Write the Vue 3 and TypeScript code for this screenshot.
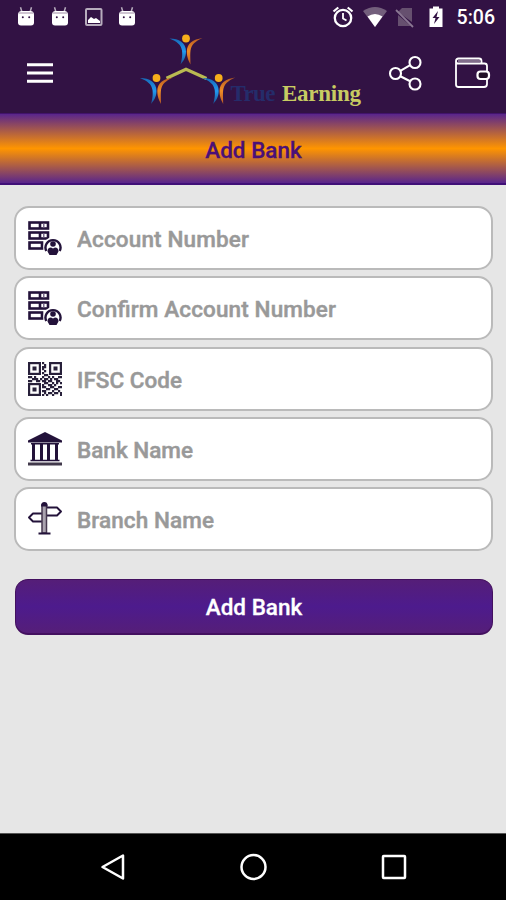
<script setup lang="ts">
type IconName = 'account' | 'qr' | 'bank' | 'sign'

interface Field {
  label: string
  icon: IconName
  width: number
}

const fields: Field[] = [
  { label: 'Account Number', icon: 'account', width: 172 },
  { label: 'Confirm Account Number', icon: 'account', width: 259 },
  { label: 'IFSC Code', icon: 'qr', width: 105 },
  { label: 'Bank Name', icon: 'bank', width: 116 },
  { label: 'Branch Name', icon: 'sign', width: 137 },
]

const people = [
  { x: 46, y: 8.5 },
  { x: 16.5, y: 48 },
  { x: 78.7, y: 48 },
]

const finders = [
  { x: 0, y: 0 },
  { x: 21, y: 0 },
  { x: 0, y: 21 },
]

// Modules between the finder squares, each two units wide.
const qrRows: string[] = [
  '00000001000000000',
  '00000000100000000',
  '00000001100000000',
  '00000001000000000',
  '00000000100000000',
  '00000001000000000',
  '00000000110000000',
  '11010001001010011',
  '00111010110101100',
  '11001101101100110',
  '00000000110010101',
  '00000001001101000',
  '00000001100110011',
  '00000000011001100',
  '00000001100010010',
  '00000000101101101',
  '00000001010010001',
]
const qrPath = qrRows
  .map((row, y) => [...row].map((c, x) => (c === '1' ? `M${x * 2} ${y * 2}h2.2v2.2h-2.2z` : '')).join(''))
  .join('')
</script>

<template>
  <div class="screen">
    <div class="status">
      <div class="notices">
        <template v-for="n in 4" :key="n">
          <svg v-if="n === 3" width="20" height="20" viewBox="0 0 20 20">
            <rect x="2" y="2" width="15.500" height="16" rx="1" fill="none" stroke="#b7acbd" stroke-width="2" />
            <path d="M4 16v-3l3-3 3 2 2-1 4 3v2z" fill="#fff" />
          </svg>
          <svg v-else width="20" height="20" viewBox="0 0 20 20">
            <path d="M4.500 .3l1.500 5M15.500 .3l-1.500 5" stroke="#b7acbd" stroke-width="1.500" />
            <path d="M2 8Q2 4 5.500 4h9q3.500 0 3.500 4v7.500q0 3-3 3H5q-3 0-3-3z" fill="#fff" />
            <path d="M3 6h14" stroke="#cfc5d2" stroke-width="2" />
            <circle cx="6.800" cy="10.300" r="1" fill="#321244" />
            <circle cx="13.200" cy="10.300" r="1" fill="#321244" />
          </svg>
        </template>
      </div>
      <div class="system">
        <svg width="24" height="24" viewBox="0 0 24 24" fill="none" stroke="#fff">
          <circle cx="12" cy="13" r="8.200" stroke-width="2.300" />
          <path d="M12 8v5.500l3.500 2" stroke-width="1.800" />
          <path d="M2.500 6.500l4.800-4M21.500 6.500l-4.800-4" stroke-width="2.200" />
        </svg>
        <svg class="wifi" width="24" height="22" viewBox="0 0 24 22">
          <path d="M0 5Q12-3 24 5L12 21z" fill="#735f7c" />
          <path d="M4.500 10.500Q12 5.500 19.500 10.500L12 21z" fill="#fff" />
        </svg>
        <svg class="sim" width="20" height="22" viewBox="0 0 20 22">
          <path d="M7 2h10v14L3 6zM3 9v11h13z" fill="#66506f" />
          <path d="M1 4l17 17" stroke="#8b7893" stroke-width="1.800" />
        </svg>
        <svg class="battery" width="16" height="22" viewBox="0 0 16 22">
          <path d="M5 .5h6v2h3.500v18.500h-13V2.500H5z" fill="#fff" />
          <path d="M10 5l-5.500 7h3L6 18l5.500-7h-3z" fill="#321244" />
        </svg>
        <span class="clock">5:06</span>
      </div>
    </div>

    <header class="header">
      <svg class="menu" width="28" height="22" viewBox="0 0 28 22">
        <path d="M1 2.700h26M1 11h26M1 19.300h26" stroke="#fff" stroke-width="3" />
      </svg>
      <svg class="logo" width="224" height="80" viewBox="0 0 224 80">
        <defs>
          <linearGradient id="limb" x1="0" y1="0" x2="0" y2="1">
            <stop offset="0" stop-color="#1769b8" />
            <stop offset=".5" stop-color="#219af0" />
            <stop offset="1" stop-color="#1b4f91" />
          </linearGradient>
          <linearGradient id="flame" x1="0" y1="0" x2="0" y2="1">
            <stop offset="0" stop-color="#b85b22" />
            <stop offset=".5" stop-color="#f08c26" />
            <stop offset="1" stop-color="#b75826" />
          </linearGradient>
        </defs>
        <path d="M26.500 48.300L46 39.300l20.500 9.200" fill="none" stroke="#b9ba52" stroke-width="3.200" />
        <g v-for="(p, i) in people" :key="i" :transform="`translate(${p.x} ${p.y})`">
          <path d="M-16.500 0C-7 0 0 4 0 13C0 19-3 23-5.500 26C-4 20-3.500 17-4 12C-5 6-9 3-16.500 0z" fill="url(#limb)" />
          <path d="M16.500-.5C7 1 .8 5 .8 13C.8 19 3 23 4.500 26C4.500 20 4 17 4.500 12C5.500 6 9 3 16.500-.5z" fill="url(#flame)" />
          <circle cx="0" cy="0" r="3.900" fill="#f7ae1b" />
        </g>
        <text x="90.500" y="71" textLength="45" class="word true">True</text>
        <text x="142" y="71" textLength="79" class="word earning">Earning</text>
      </svg>
      <svg class="share" width="36" height="38" viewBox="0 0 36 38" fill="none" stroke="#fff" stroke-width="2.100">
        <circle cx="7.500" cy="19.500" r="5.500" />
        <circle cx="27" cy="8.500" r="5.500" />
        <circle cx="27" cy="30" r="5.500" />
        <path d="M12.300 16.800l9.900-5.600M12.300 22.200l9.900 5.100" />
      </svg>
      <svg class="wallet" width="38" height="34" viewBox="0 0 38 34" fill="none" stroke="#fff" stroke-width="1.800">
        <path d="M2 4v23.500q0 2.500 2.500 2.500H30q3 0 3-3v-5M33 15v-6q0-2.500-2.500-2.500H4Q2 6.500 2 4t2.500-2.500H25q2.500 0 2.500 2.500v2" />
        <path d="M4 4h22" stroke="#b7acbd" stroke-width="1.200" />
        <rect x="23.500" y="14.500" width="11.500" height="7.500" rx="3" fill="#211127" stroke-width="2.200" />
      </svg>
    </header>

    <div class="banner"><h1 class="action-text">Add Bank</h1></div>

    <main class="content">
      <div class="fields">
        <div v-for="f in fields" :key="f.label" class="field">
          <svg v-if="f.icon === 'account'" class="icon" viewBox="0 0 34 34">
            <g fill="#fff" stroke="#23123a" stroke-width="2.600">
              <rect x="1.500" y="1.500" width="18.500" height="6" />
              <rect x="1.500" y="11.500" width="18.500" height="6" />
              <rect x="1.500" y="21.500" width="12.500" height="6" />
            </g>
            <path d="M12 1v7M12 11v7" stroke="#23123a" stroke-width="2.600" />
            <path d="M15.800 2v5M15.800 12v5" stroke="#66557a" stroke-width="1.300" />
            <circle cx="25" cy="25.500" r="9.500" fill="#fff" />
            <path d="M18.300 30a7.500 7.500 0 1 1 13.400 0" fill="none" stroke="#23123a" stroke-width="2.400" />
            <circle cx="25" cy="23" r="2.800" fill="#23123a" />
            <path d="M19.500 30.500q0-4 3.500-4l2 1 2-1q3.500 0 3.500 4l-2 3.500h-7z" fill="#23123a" />
          </svg>
          <svg v-else-if="f.icon === 'qr'" class="icon" viewBox="0 0 34 34">
            <g v-for="(p, i) in finders" :key="i" :transform="`translate(${p.x} ${p.y})`">
              <rect x="1.100" y="1.100" width="10.800" height="10.800" fill="#fff" stroke="#28203a" stroke-width="2.200" />
              <rect x="4.500" y="4.500" width="4" height="4" fill="#28203a" />
            </g>
            <path :d="qrPath" fill="#28203a" />
          </svg>
          <svg v-else-if="f.icon === 'bank'" class="icon" viewBox="0 0 34 34">
            <path d="M0 8.500L17 0l17 8.500V10.500H0z" fill="#23123a" />
            <path d="M3 11.800h28M2.500 28.500h29" stroke="#23123a" stroke-width="1.600" />
            <path d="M5.500 12v16M13.500 12v16M20.500 12v16M28.500 12v16" stroke="#23123a" stroke-width="3" />
            <path d="M0 32h34" stroke="#41394b" stroke-width="3" />
          </svg>
          <svg v-else class="icon" viewBox="0 0 34 34">
            <g fill="#fff" stroke="#23123a" stroke-width="1.900" stroke-linejoin="round">
              <path d="M17 5.500h12l4 4-4 4H17z" />
              <path d="M17 11.500H5l-4 4 4 4h12z" />
            </g>
            <rect x="14" y="3" width="4.500" height="28" fill="#aaa3af" stroke="#46394f" stroke-width="1.500" />
            <path d="M14 3.500q0-2.500 2.300-2.500t2.400 2.500zM10.500 31.500h12" fill="#23123a" stroke="#23123a" stroke-width="1.800" />
          </svg>
          <svg class="placeholder" height="32" :width="f.width + 4" :viewBox="`0 0 ${f.width + 4} 32`">
            <text x="0" y="24.500" :textLength="f.width">{{ f.label }}</text>
          </svg>
        </div>
      </div>
      <button class="submit action-text" type="button">Add Bank</button>
    </main>

    <nav class="navigation">
      <svg width="28" height="28" viewBox="0 0 28 28"><path d="M3.500 14L24 2.500v23z" /></svg>
      <svg width="28" height="28" viewBox="0 0 28 28"><circle cx="13.500" cy="14" r="12" /></svg>
      <svg width="28" height="28" viewBox="0 0 28 28"><rect x="3" y="3" width="22" height="22" rx=".7" /></svg>
    </nav>
  </div>
</template>

<style>
body {
  margin: 0;
}
</style>

<style scoped>
.screen {
  display: flex;
  flex-direction: column;
  width: 506px;
  height: 900px;
  overflow: hidden;
  background: #e6e6e6;
  font-family: Roboto, sans-serif;
}
svg {
  display: block;
  flex: none;
}
.status {
  display: flex;
  justify-content: space-between;
  height: 34px;
  padding: 0 11px 0 16px;
  background: #321244;
}
.notices {
  display: flex;
  gap: 13.800px;
  padding-top: 7px;
}
.system {
  display: flex;
  align-items: center;
  height: 34px;
}
.wifi {
  margin-left: 8px;
}
.sim {
  margin-left: 8px;
}
.battery {
  margin-left: 13px;
}
.clock {
  margin-left: 13px;
  color: #fff;
  font-size: 19.500px;
  font-weight: 500;
  line-height: 36px;
  padding-top: 2px;
}
.header {
  display: flex;
  align-items: flex-start;
  height: 79px;
  background: #321244;
}
.menu {
  margin: 28px 0 0 26px;
}
.logo {
  margin: -4px 0 0 86px;
}
.word {
  font: bold 23px 'Liberation Serif', serif;
}
.true {
  fill: #252c6a;
}
.earning {
  fill: #c8cb62;
}
.share {
  margin: 20px 0 0 24px;
}
.wallet {
  margin: 23px 0 0 30px;
}
.banner {
  display: flex;
  align-items: center;
  justify-content: center;
  box-sizing: border-box;
  height: 72px;
  border-top: 1px solid #42136c;
  border-bottom: 2px solid #401078;
  background: linear-gradient(#59258c, #ff9500 50%, #59258c);
}
.action-text {
  margin: 0;
  font-family: Roboto, sans-serif;
  font-size: 22.500px;
  font-weight: 500;
  line-height: 28px;
  -webkit-text-stroke: 0.300px currentColor;
}
.banner .action-text {
  padding: 3px 0 0 1px;
  color: #4a1078;
}
.content {
  flex: 1;
  padding: 21px 13px 0 14px;
}
.fields {
  display: flex;
  flex-direction: column;
  gap: 6.300px;
}
.field {
  display: flex;
  align-items: center;
  box-sizing: border-box;
  height: 64px;
  padding-left: 12px;
  border: 2px solid #bababa;
  border-radius: 15px;
  background: #fff;
}
.icon {
  width: 34px;
  height: 34px;
}
.placeholder {
  margin-left: 14.800px;
  fill: #999;
  stroke: #999;
  stroke-width: 0.450px;
  font-size: 22.500px;
  font-weight: 500;
}
.submit {
  display: block;
  width: 478px;
  height: 56px;
  margin-top: 28px;
  margin-left: 0.500px;
  padding: 1px 0 0 1px;
  border: 1px solid #43105f;
  border-bottom-width: 2px;
  border-radius: 13px;
  background: linear-gradient(#551e78, #4d1b8d 50%, #551e78);
  color: #fff;
}
.navigation {
  display: flex;
  align-items: center;
  justify-content: space-between;
  box-sizing: border-box;
  height: 67px;
  padding: 0 98px 0 99px;
  border-top: 1px solid #555;
  background: #000;
}
.navigation svg {
  fill: none;
  stroke: #fff;
  stroke-width: 2.500;
  stroke-linejoin: round;
}
</style>
